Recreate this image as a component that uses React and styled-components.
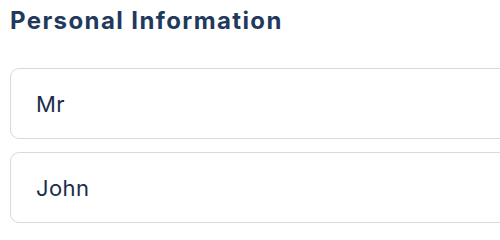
import React from 'react';
import styled, { createGlobalStyle } from 'styled-components';

const GlobalStyle = createGlobalStyle`
  html, body {
    margin: 0;
    padding: 0;
    background: #ffffff;
    overflow: hidden;
  }
  body {
    font-family: Inter, "Noto Sans", sans-serif;
  }
`;

const Section = styled.section`
  width: 580px;
  padding: 6px 0 0 10px;
  box-sizing: border-box;
`;

const Heading = styled.h2`
  margin: 0 0 32px;
  font-size: 24px;
  font-weight: 700;
  line-height: 30px;
  color: #1f3a5c;
  letter-spacing: 1.4px;
`;

const Fields = styled.div`
  display: flex;
  flex-direction: column;
  gap: 13px;
`;

const Input = styled.input`
  box-sizing: border-box;
  width: 100%;
  height: 71px;
  padding: 0 25px;
  border: 1px solid #d6dbe1;
  border-radius: 9px;
  background: #ffffff;
  font-family: Inter, "Noto Sans", sans-serif;
  font-size: 22px;
  letter-spacing: 0.4px;
  color: #1b2d4a;
  outline: none;
`;

const App = () => {
  return (
    <>
      <GlobalStyle />
      <Section>
        <Heading>Personal Information</Heading>
        <Fields>
          <Input type="text" defaultValue="Mr" />
          <Input type="text" defaultValue="John" />
        </Fields>
      </Section>
    </>
  );
};

export default App;
